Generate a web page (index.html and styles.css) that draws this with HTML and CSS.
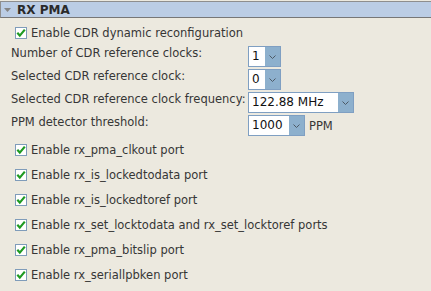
FILE: index.html
```html
<!DOCTYPE html>
<html lang="en">
<head>
    <meta charset="UTF-8">
    <meta name="viewport" content="width=device-width, initial-scale=1.0">
    <title>RX PMA</title>
    <link rel="stylesheet" href="styles.css">
</head>
<body>
    <main class="panel">
        <div class="sectionHead">
            <svg class="sectionArrow" width="7" height="4" viewBox="0 0 7 4"><path d="M0 0 H7 L3.5 4 Z" fill="#858585"/></svg>
            <h2 class="sectionTitle">RX PMA</h2>
        </div>

        <div class="content">
            <label class="checkRow">
                <span class="checkBox"><svg width="10" height="10" viewBox="0 0 10 10"><path d="M1.3 4.8 L3.8 7.6 L8.8 1.6" fill="none" stroke="#1e9a22" stroke-width="2.2"/></svg></span>
                <span class="checkLabel">Enable CDR dynamic reconfiguration</span>
            </label>

            <div class="formGrid">
                <span class="fieldLabel">Number of CDR reference clocks:</span>
                <div class="fieldCell">
                    <div class="combo comboSmall">
                        <span class="comboValue">1</span>
                        <span class="comboBtn"><svg width="7" height="4" viewBox="0 0 7 4"><path d="M0.5 0.5 L3.5 3.5 L6.5 0.5" fill="none" stroke="#4d5a66" stroke-width="1"/></svg></span>
                    </div>
                </div>

                <span class="fieldLabel">Selected CDR reference clock:</span>
                <div class="fieldCell">
                    <div class="combo comboSmall">
                        <span class="comboValue">0</span>
                        <span class="comboBtn"><svg width="7" height="4" viewBox="0 0 7 4"><path d="M0.5 0.5 L3.5 3.5 L6.5 0.5" fill="none" stroke="#4d5a66" stroke-width="1"/></svg></span>
                    </div>
                </div>

                <span class="fieldLabel">Selected CDR reference clock frequency:</span>
                <div class="fieldCell">
                    <div class="combo comboWide">
                        <span class="comboValue">122.88 MHz</span>
                        <span class="comboBtn"><svg width="7" height="4" viewBox="0 0 7 4"><path d="M0.5 0.5 L3.5 3.5 L6.5 0.5" fill="none" stroke="#4d5a66" stroke-width="1"/></svg></span>
                    </div>
                </div>

                <span class="fieldLabel">PPM detector threshold:</span>
                <div class="fieldCell">
                    <div class="combo comboMid">
                        <span class="comboValue">1000</span>
                        <span class="comboBtn"><svg width="7" height="4" viewBox="0 0 7 4"><path d="M0.5 0.5 L3.5 3.5 L6.5 0.5" fill="none" stroke="#4d5a66" stroke-width="1"/></svg></span>
                    </div>
                    <span class="unit">PPM</span>
                </div>
            </div>

            <div class="portList">
                <label class="checkRow">
                    <span class="checkBox"><svg width="10" height="10" viewBox="0 0 10 10"><path d="M1.3 4.8 L3.8 7.6 L8.8 1.6" fill="none" stroke="#1e9a22" stroke-width="2.2"/></svg></span>
                    <span class="checkLabel">Enable rx_pma_clkout port</span>
                </label>
                <label class="checkRow">
                    <span class="checkBox"><svg width="10" height="10" viewBox="0 0 10 10"><path d="M1.3 4.8 L3.8 7.6 L8.8 1.6" fill="none" stroke="#1e9a22" stroke-width="2.2"/></svg></span>
                    <span class="checkLabel">Enable rx_is_lockedtodata port</span>
                </label>
                <label class="checkRow">
                    <span class="checkBox"><svg width="10" height="10" viewBox="0 0 10 10"><path d="M1.3 4.8 L3.8 7.6 L8.8 1.6" fill="none" stroke="#1e9a22" stroke-width="2.2"/></svg></span>
                    <span class="checkLabel">Enable rx_is_lockedtoref port</span>
                </label>
                <label class="checkRow">
                    <span class="checkBox"><svg width="10" height="10" viewBox="0 0 10 10"><path d="M1.3 4.8 L3.8 7.6 L8.8 1.6" fill="none" stroke="#1e9a22" stroke-width="2.2"/></svg></span>
                    <span class="checkLabel">Enable rx_set_locktodata and rx_set_locktoref ports</span>
                </label>
                <label class="checkRow">
                    <span class="checkBox"><svg width="10" height="10" viewBox="0 0 10 10"><path d="M1.3 4.8 L3.8 7.6 L8.8 1.6" fill="none" stroke="#1e9a22" stroke-width="2.2"/></svg></span>
                    <span class="checkLabel">Enable rx_pma_bitslip port</span>
                </label>
                <label class="checkRow">
                    <span class="checkBox"><svg width="10" height="10" viewBox="0 0 10 10"><path d="M1.3 4.8 L3.8 7.6 L8.8 1.6" fill="none" stroke="#1e9a22" stroke-width="2.2"/></svg></span>
                    <span class="checkLabel">Enable rx_seriallpbken port</span>
                </label>
            </div>
        </div>
    </main>
</body>
</html>
```

FILE: styles.css
```css
html, body {
  margin: 0;
  padding: 0;
  background-color: #ece9df;
  font-family: "DejaVu Sans", sans-serif;
  color: #363636;
}

.panel {
  width: 100%;
  height: 291px;
  padding-top: 1px;
  box-sizing: border-box;
}

.sectionHead {
  height: 15px;
  border-top: 1px solid #8e8e8e;
  border-bottom: 1px solid #777;
  border-left: 1px solid #8e8e8e;
  background-color: #bbcde5;
  display: flex;
  align-items: center;
  padding-left: 3px;

  .sectionArrow {
    margin-right: 6px;
  }

  .sectionTitle {
    margin: 0;
    font-size: 12px;
    font-weight: 700;
    line-height: 14px;
    color: #2a2a2a;
  }
}

.content {
  padding: 9px 0 0 11px;
}

.checkRow {
  height: 12px;
  display: flex;
  align-items: center;
  padding-left: 4px;

  .checkBox {
    width: 10px;
    height: 10px;
    border: 1px solid #7f9cba;
    background-color: #fff;
    display: flex;
    margin-right: 4px;
  }

  .checkLabel {
    font-size: 11.5px;
    line-height: 14px;
    white-space: nowrap;
  }
}

.formGrid {
  margin-top: 7px;
  display: grid;
  grid-template-columns: 237px auto;
  grid-auto-rows: 21px;
  row-gap: 2px;

  .fieldLabel {
    font-size: 11.5px;
    line-height: 14px;
    white-space: nowrap;
  }

  .fieldCell {
    display: flex;
    align-items: center;
  }

  .unit {
    font-size: 11.5px;
    line-height: 14px;
    margin-left: 4px;
  }
}

.combo {
  height: 21px;
  box-sizing: border-box;
  border: 1px solid #7f9fc2;
  background-color: #fff;
  display: flex;

  .comboValue {
    flex: 1;
    font-size: 12px;
    line-height: 19px;
    padding-left: 3px;
    color: #111;
    white-space: nowrap;
  }

  .comboBtn {
    width: 15px;
    background-color: #8db0cd;
    display: flex;
    align-items: center;
    justify-content: center;
  }
}

.comboSmall {
  width: 33px;
}

.comboMid {
  width: 57px;
}

.comboWide {
  width: 106px;
}

.portList {
  margin-top: 8px;
  display: flex;
  flex-direction: column;
  gap: 13px;
}
```
